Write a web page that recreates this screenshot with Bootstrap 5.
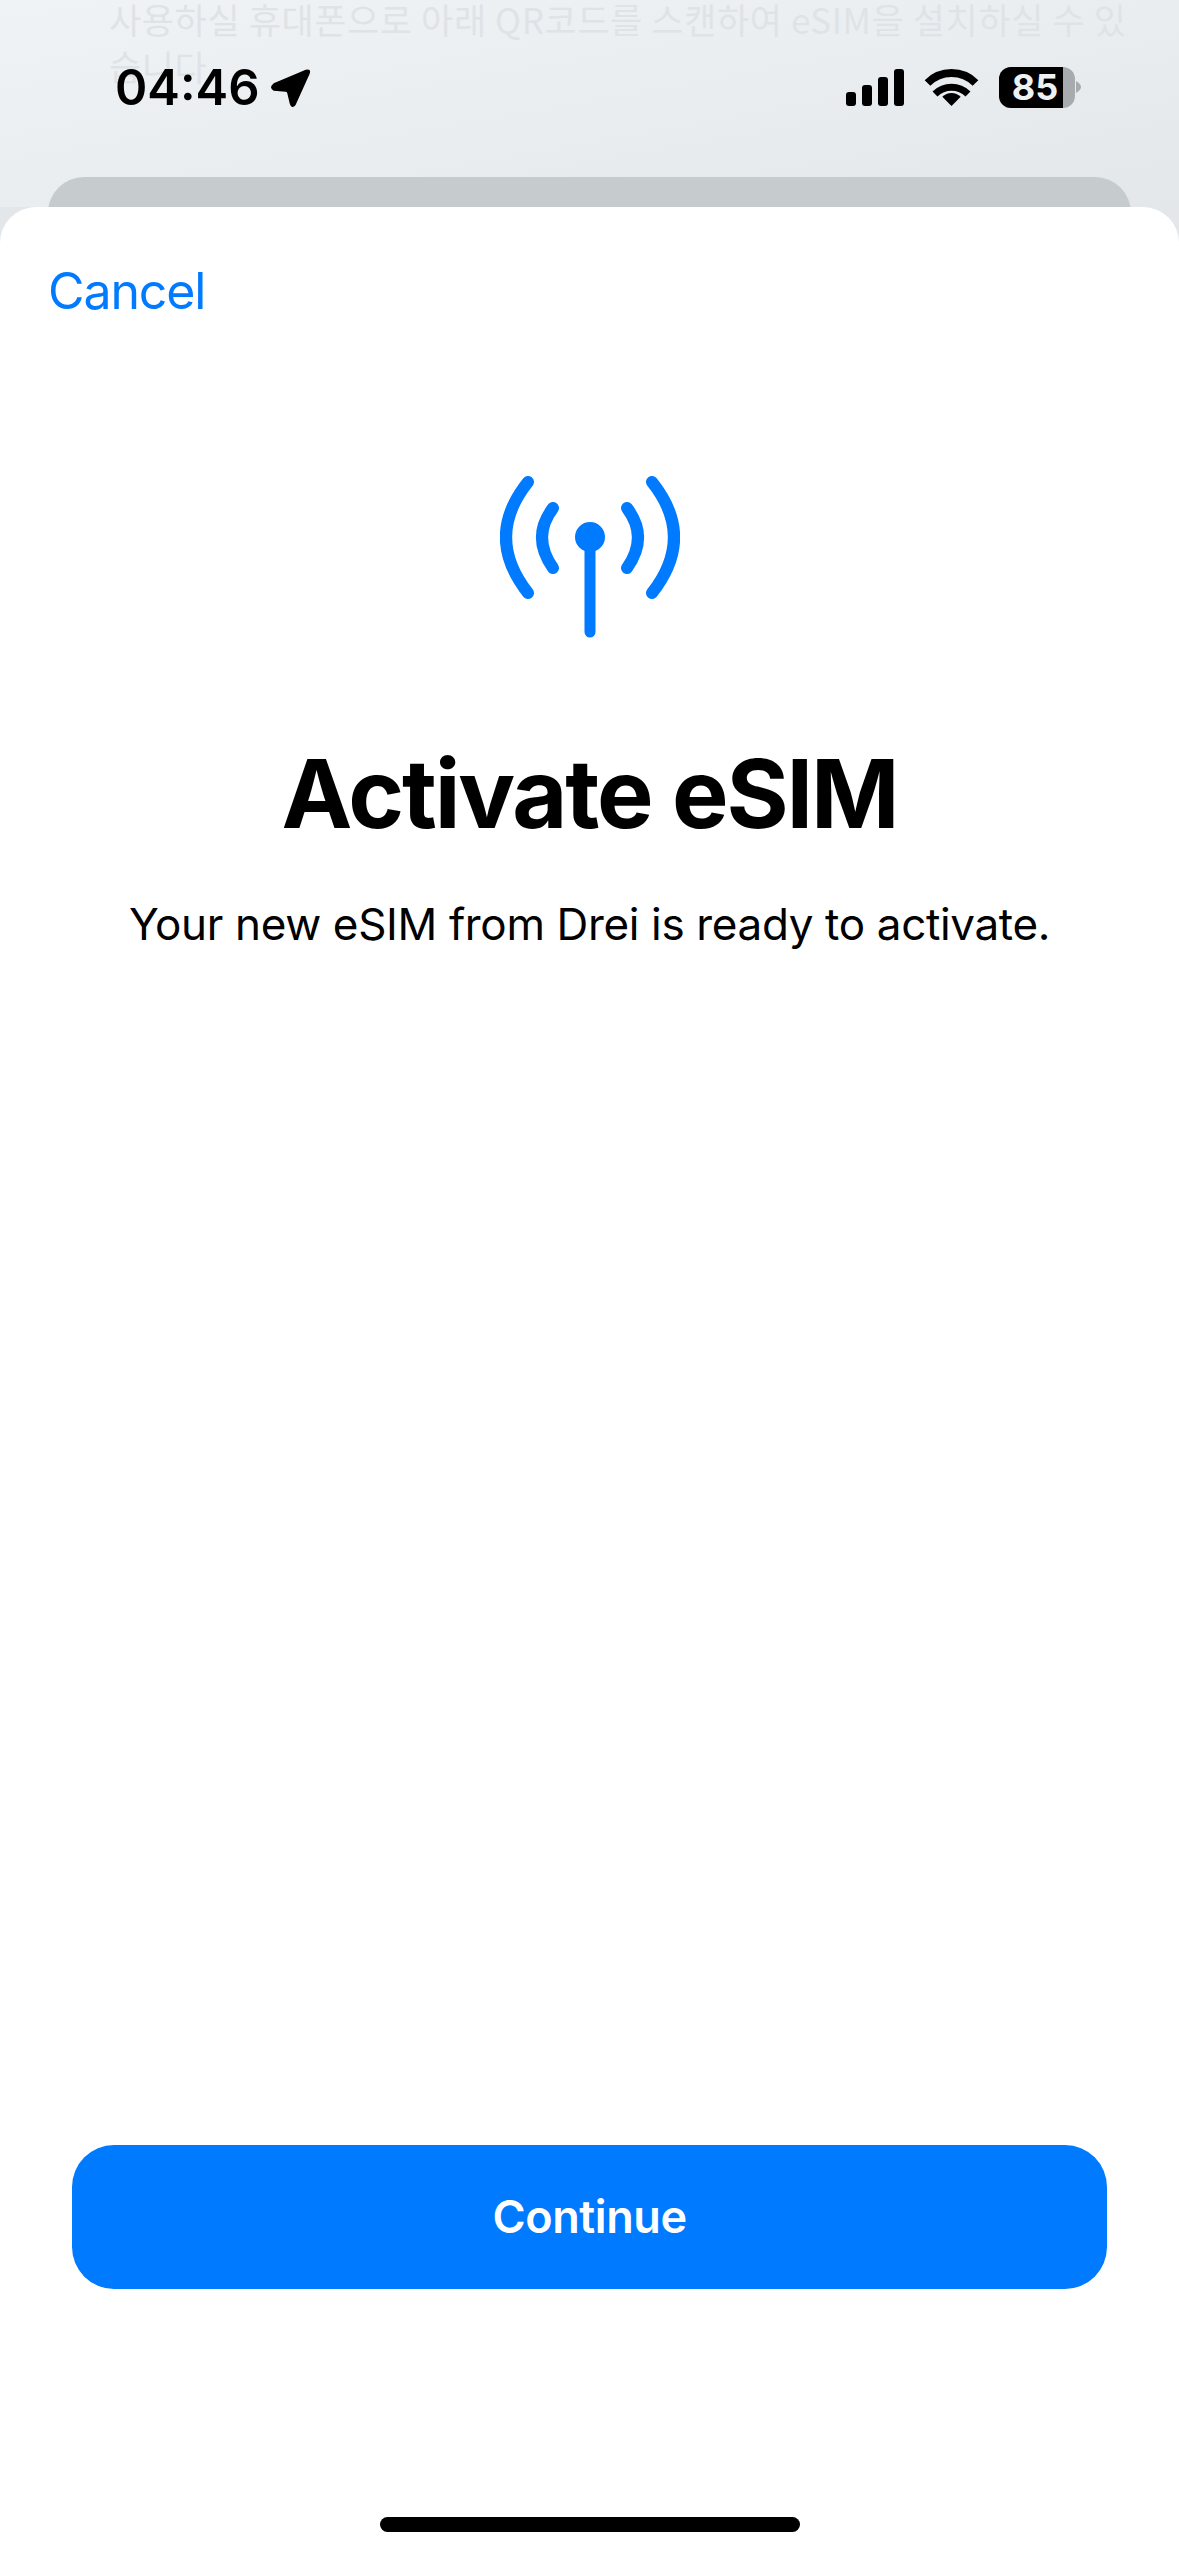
<!DOCTYPE html>
<html lang="en">
<head>
    <meta charset="UTF-8">
    <meta name="viewport" content="width=device-width, initial-scale=1">
    <title>Activate eSIM</title>
    <link href="https://cdn.jsdelivr.net/npm/bootstrap@5.3.0/dist/css/bootstrap.min.css" rel="stylesheet">
    <style>
        body { font-family: Inter, "Liberation Sans", "Noto Sans CJK KR", sans-serif; background: #e3e7ea; overflow: hidden; }
        .behind { height: 207px; background: linear-gradient(170deg, #eff3f6 0%, #eaeef1 45%, #e3e7ea 100%); overflow: hidden; }
        .behind-text { margin: -5px 40px 0 109px; font-family: "Noto Sans CJK KR", sans-serif; font-size: 35px; line-height: 47px; color: #dfe3e7; letter-spacing: .6px; word-break: break-all; height: 94px; overflow: hidden; }
        .behind-card { margin: 88px 48px 0 48px; height: 80px; background: #c6cbce; border-radius: 36px 36px 0 0; }
        .status-time { left: 115px; top: 58px; font-size: 49px; line-height: 60px; font-weight: 600; color: #000; }
        .status-icons { left: 0; top: 0; }
        .sheet { background: #fff; border-radius: 36px 36px 0 0; padding-top: 54px; height: 2349px; }
        .cancel-link { margin-left: 48px; font-size: 50px; line-height: 60px; letter-spacing: -1.100px; color: #007aff; text-decoration: none; }
        .antenna { margin-top: 149px; }
        .sheet-title { margin: 99px 0 0; font-size: 95px; line-height: 110px; font-weight: 700; letter-spacing: -2.100px; color: #000; }
        .sheet-sub { margin: 47px 0 0; font-size: 44px; line-height: 56px; letter-spacing: -.35px; color: #000; }
        .btn-continue { margin: auto 72px 228px; width: 1035px; height: 144px; border: 0; border-radius: 42px; background: #007aff; color: #fff; font-size: 45px; font-weight: 600; letter-spacing: -.4px; }
        .btn-continue:hover { background: #007aff; color: #fff; }
        .home-bar { width: 420px; height: 15px; margin: 0 auto 24px; background: #000; border-radius: 8px; }
        .batt-text { font-family: Inter, sans-serif; font-size: 36px; font-weight: 700; fill: #eef1f3; }
    </style>
</head>
<body>
    <div class="min-vh-100 d-flex flex-column position-relative">
        <div class="behind">
            <p class="behind-text">사용하실 휴대폰으로 아래 QR코드를 스캔하여 eSIM을 설치하실 수 있습니다.</p>
            <div class="behind-card"></div>
        </div>

        <div class="position-absolute status-time">04:46</div>
        <svg class="position-absolute status-icons" width="1179" height="130" viewBox="0 0 1179 130" aria-hidden="true">
            <!-- location arrow -->
            <path d="M274 84 L306 70.500 Q310.500 69 309 73.500 L295 104.500 Q292 108.500 290.500 103.500 L288 93 Q287.500 91 285.500 91 L274 90 Q269.500 87.500 274 84 Z" fill="#000" stroke="#000" stroke-width="1.500" stroke-linejoin="round"/>
            <!-- signal -->
            <rect x="846" y="92" width="10" height="14" rx="3" fill="#000"/>
            <rect x="862" y="85" width="10" height="21" rx="3" fill="#000"/>
            <rect x="878" y="77" width="10" height="29" rx="3" fill="#000"/>
            <rect x="894" y="69" width="10" height="37" rx="3" fill="#000"/>
            <!-- wifi -->
            <path d="M927.500 83 A34 34 0 0 1 975.500 83" fill="none" stroke="#000" stroke-width="8"/>
            <path d="M935 94 A23.500 23.500 0 0 1 968 94" fill="none" stroke="#000" stroke-width="7"/>
            <path d="M951.500 106 L942.300 96.800 A13 13 0 0 1 960.700 96.800 Z" fill="#000"/>
            <!-- battery -->
            <rect x="999" y="67" width="76" height="41" rx="12" fill="#a7abae"/>
            <path d="M1011 67 H1063 V108 H1011 A12 12 0 0 1 999 96 V79 A12 12 0 0 1 1011 67 Z" fill="#000"/>
            <path d="M1076 81 Q1081 84 1081 87 Q1081 90 1076 93 Z" fill="#a7abae"/>
            <text class="batt-text" x="1035" y="100" text-anchor="middle">85</text>
        </svg>

        <div class="sheet d-flex flex-column position-relative">
            <div><a class="cancel-link" href="#">Cancel</a></div>

            <svg class="antenna d-block mx-auto" width="180" height="170" viewBox="500 470 180 170" aria-hidden="true">
                <g fill="none" stroke="#007aff" stroke-linecap="round">
                    <path d="M528 482 Q484 537 528 593" stroke-width="12"/>
                    <path d="M652 482 Q696 537 652 593" stroke-width="12"/>
                    <path d="M553 508 Q531 537 553 568" stroke-width="12"/>
                    <path d="M627 508 Q649 537 627 568" stroke-width="12"/>
                    <path d="M590 537 V632" stroke-width="11"/>
                </g>
                <circle cx="590" cy="537" r="15" fill="#007aff"/>
            </svg>

            <h1 class="sheet-title text-center">Activate eSIM</h1>
            <p class="sheet-sub text-center">Your new eSIM from Drei is ready to activate.</p>

            <button type="button" class="btn btn-continue">Continue</button>
            <div class="home-bar"></div>
        </div>
    </div>

    <script src="https://cdn.jsdelivr.net/npm/bootstrap@5.3.0/dist/js/bootstrap.bundle.min.js"></script>
</body>
</html>
